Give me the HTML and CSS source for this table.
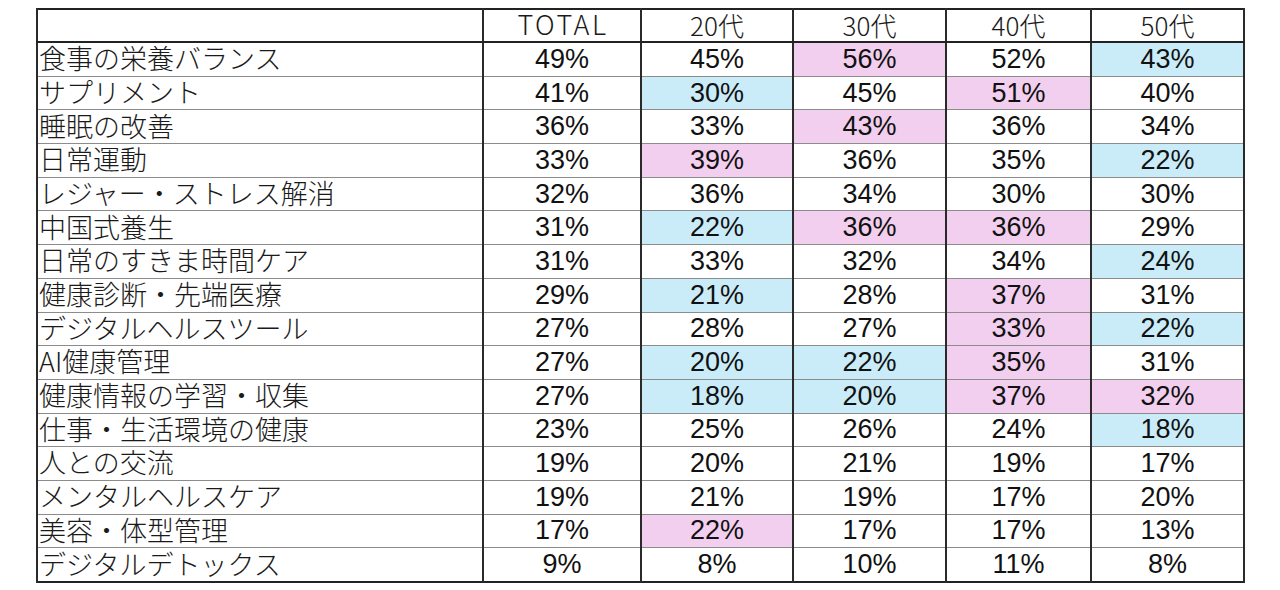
FILE: index.html
```html
<!DOCTYPE html>
<html lang="ja">
<head>
<meta charset="utf-8">
<title>年代別 健康施策</title>
<link rel="stylesheet" href="styles.css">
</head>
<body>
<table class="grid">
  <colgroup>
    <col class="c-label"><col class="c-total"><col class="c-20"><col class="c-30"><col class="c-40"><col class="c-50">
  </colgroup>
  <thead>
    <tr><th class="label"></th><th class="total">TOTAL</th><th>20代</th><th>30代</th><th>40代</th><th>50代</th></tr>
  </thead>
  <tbody>
    <tr><td class="label">食事の栄養バランス</td><td>49%</td><td>45%</td><td class="hi">56%</td><td>52%</td><td class="lo">43%</td></tr>
    <tr><td class="label">サプリメント</td><td>41%</td><td class="lo">30%</td><td>45%</td><td class="hi">51%</td><td>40%</td></tr>
    <tr><td class="label">睡眠の改善</td><td>36%</td><td>33%</td><td class="hi">43%</td><td>36%</td><td>34%</td></tr>
    <tr><td class="label">日常運動</td><td>33%</td><td class="hi">39%</td><td>36%</td><td>35%</td><td class="lo">22%</td></tr>
    <tr><td class="label">レジャー・ストレス解消</td><td>32%</td><td>36%</td><td>34%</td><td>30%</td><td>30%</td></tr>
    <tr><td class="label">中国式養生</td><td>31%</td><td class="lo">22%</td><td class="hi">36%</td><td class="hi">36%</td><td>29%</td></tr>
    <tr><td class="label">日常のすきま時間ケア</td><td>31%</td><td>33%</td><td>32%</td><td>34%</td><td class="lo">24%</td></tr>
    <tr><td class="label">健康診断・先端医療</td><td>29%</td><td class="lo">21%</td><td>28%</td><td class="hi">37%</td><td>31%</td></tr>
    <tr><td class="label">デジタルヘルスツール</td><td>27%</td><td>28%</td><td>27%</td><td class="hi">33%</td><td class="lo">22%</td></tr>
    <tr><td class="label">AI健康管理</td><td>27%</td><td class="lo">20%</td><td class="lo">22%</td><td class="hi">35%</td><td>31%</td></tr>
    <tr><td class="label">健康情報の学習・収集</td><td>27%</td><td class="lo">18%</td><td class="lo">20%</td><td class="hi">37%</td><td class="hi">32%</td></tr>
    <tr><td class="label">仕事・生活環境の健康</td><td>23%</td><td>25%</td><td>26%</td><td>24%</td><td class="lo">18%</td></tr>
    <tr><td class="label">人との交流</td><td>19%</td><td>20%</td><td>21%</td><td>19%</td><td>17%</td></tr>
    <tr><td class="label">メンタルヘルスケア</td><td>19%</td><td>21%</td><td>19%</td><td>17%</td><td>20%</td></tr>
    <tr><td class="label">美容・体型管理</td><td>17%</td><td class="hi">22%</td><td>17%</td><td>17%</td><td>13%</td></tr>
    <tr><td class="label">デジタルデトックス</td><td>9%</td><td>8%</td><td>10%</td><td>11%</td><td>8%</td></tr>
  </tbody>
</table>
</body>
</html>
```

FILE: styles.css
```css
html, body {
  margin: 0;
  padding: 0;
  background: #ffffff;
}

body {
  padding: 8px 0 0 36px;
  color: #111111;
}

.grid {
  border-collapse: collapse;
  table-layout: fixed;
  width: 1207px;
  border: 2px solid #222222;
}

.c-label { width: 446px; }
.c-total { width: 158px; }
.c-20 { width: 152px; }
.c-30 { width: 153px; }
.c-40 { width: 145px; }
.c-50 { width: 153px; }

.grid th,
.grid td {
  padding: 0;
  text-align: center;
  vertical-align: middle;
  line-height: 1;
  border-left: 2px solid #2a2a2a;
  border-right: 2px solid #2a2a2a;
  border-top: 1px solid #8c8c8c;
  border-bottom: 1px solid #8c8c8c;
  white-space: nowrap;
}

.grid thead th {
  height: 29px;
  padding-bottom: 2px;
  font-family: "Noto Sans CJK JP", "Noto Sans", sans-serif;
  font-weight: 300;
  font-size: 26px;
  line-height: 0.9;
  border-bottom: 2px solid #222222;
  color: #1a1a1a;
}

.grid thead th.total {
  font-size: 27px;
  letter-spacing: 2.5px;
  padding-left: 2px;
}

.grid tbody td {
  height: 32.7px;
  font-family: "Liberation Sans", Arial, sans-serif;
  font-size: 27px;
}

.grid tbody td.label {
  text-align: left;
  padding-left: 1px;
  padding-bottom: 2px;
  height: 30.7px;
  font-family: "Noto Sans CJK JP", "Noto Sans", sans-serif;
  font-weight: 300;
  font-size: 27px;
  line-height: 0.9;
  color: #1a1a1a;
}

.grid td.hi { background: #f2cfee; }
.grid td.lo { background: #caecf8; }
```
